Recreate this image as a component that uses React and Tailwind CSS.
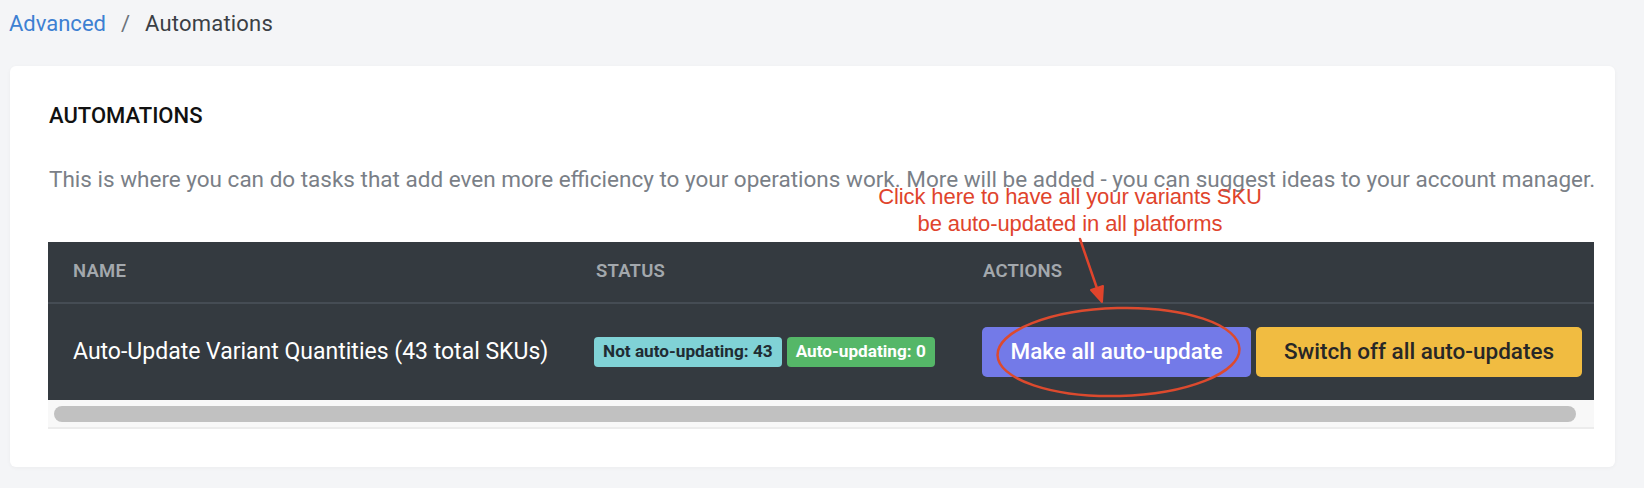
import { useState } from "react";

const rows = [
  {
    name: "Auto-Update Variant Quantities (43 total SKUs)",
    off: 43,
    on: 0,
  },
];

function Annotation() {
  return (
    <>
      <div className="absolute left-[860px] top-[117px] w-[400px] text-center text-[22px] leading-[27px] tracking-[-0.1px] text-[#e0442c] [font-family:'Liberation_Sans',Arial,sans-serif]">
        <div>Click here to have all your variants SKU</div>
        <div>be auto-updated in all platforms</div>
      </div>
      <svg
        className="absolute left-0 top-0 pointer-events-none"
        width="1605"
        height="401"
        viewBox="0 0 1605 401"
      >
        <line x1="1070" y1="173" x2="1091" y2="234" stroke="#e0442c" strokeWidth="2.5" strokeLinecap="round" />
        <polygon points="1092,236 1081,224 1093,220" fill="#e0442c" stroke="#e0442c" strokeWidth="2" strokeLinejoin="round" />
        <ellipse
          cx="1108.5"
          cy="286"
          rx="121"
          ry="44"
          fill="none"
          stroke="#dc4a2e"
          strokeWidth="2.5"
          transform="rotate(-1.5 1108.5 286)"
        />
      </svg>
    </>
  );
}

export default function App() {
  const [items] = useState(rows);

  return (
    <div className="w-[1644px] h-[488px] bg-[#f4f5f7] pl-[10px] pr-[29px] pt-[8px] [font-family:Roboto,'Noto_Sans',sans-serif]">
      {/* breadcrumb */}
      <div className="flex items-center text-[22px] leading-[32px] -ml-[1px]">
        <a className="text-[#3d80d2]">Advanced</a>
        <span className="mx-[15px] text-[#6c737b]">/</span>
        <span className="text-[#3b3f45] tracking-[0.2px]">Automations</span>
      </div>

      <div className="relative mt-[26px] bg-white rounded-[6px] shadow-[0_1px_4px_rgba(0,0,0,0.04)] pl-[38px] pr-[21px] pt-[36px] pb-[38px]">
        <h2 className="text-[22px] leading-[28px] font-medium text-[#111] ml-[1px]">AUTOMATIONS</h2>
        <p className="mt-[34px] text-[22.5px] leading-[30px] text-[#7a7f87] ml-[1px] whitespace-nowrap">
          This is where you can do tasks that add even more efficiency to your operations work. More will be added - you can suggest ideas to your account manager.
        </p>

        <div className="mt-[48px] w-[1546px]">
          <div className="bg-[#343a40]">
            <div className="grid grid-cols-[523px_387px_1fr] h-[62px] items-center border-b-2 border-[#454c54] text-[18.5px] font-semibold tracking-[0.2px] text-[#a3a8ad]">
              <div className="pl-[25px]">NAME</div>
              <div className="pl-[25px]">STATUS</div>
              <div className="pl-[25px]">ACTIONS</div>
            </div>
            {items.map((r) => (
              <div key={r.name} className="grid grid-cols-[523px_387px_1fr] h-[96px] items-center">
                <div className="pl-[25px] text-[23px] text-white whitespace-nowrap">{r.name}</div>
                <div className="pl-[23px] flex gap-[5px]">
                  <span className="h-[30px] px-[9px] flex items-center rounded-[4px] bg-[#80d2d6] text-[#1f2c33] text-[17.2px] font-bold">
                    Not auto-updating: {r.off}
                  </span>
                  <span className="h-[30px] px-[9px] flex items-center rounded-[4px] bg-[#55b768] text-white text-[17.2px] font-bold">
                    Auto-updating: {r.on}
                  </span>
                </div>
                <div className="pl-[24px] flex gap-[5px]">
                  <button className="w-[269px] h-[50px] rounded-[5px] bg-[#737ae8] text-white text-[22.5px] font-medium">
                    Make all auto-update
                  </button>
                  <button className="w-[326px] h-[50px] rounded-[5px] bg-[#f1bc41] text-[#272727] text-[22.5px] font-medium">
                    Switch off all auto-updates
                  </button>
                </div>
              </div>
            ))}
          </div>
          {/* horizontal scrollbar */}
          <div className="h-[29px] bg-[#f8f8f8] border-b-2 border-[#ececec] px-[6px] pr-[18px] flex items-center">
            <div className="h-[16px] w-full rounded-full bg-[#c1c1c1]" />
          </div>
        </div>

        <Annotation />
      </div>
    </div>
  );
}
